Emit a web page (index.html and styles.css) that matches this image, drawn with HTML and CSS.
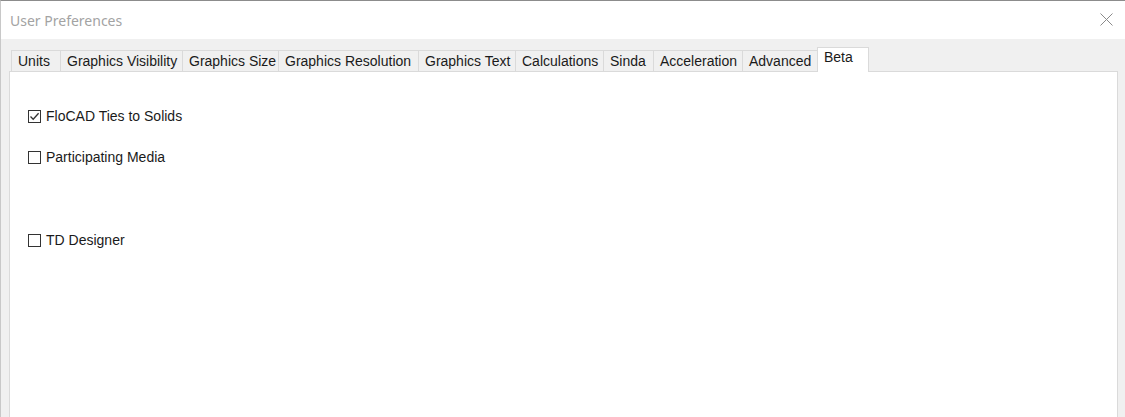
FILE: index.html
```html
<!DOCTYPE html>
<html lang="en">
<head>
    <meta charset="UTF-8">
    <title>User Preferences</title>
    <link rel="stylesheet" href="styles.css">
</head>
<body>
    <div class="window">
        <div class="titlebar">
            <span class="title">User Preferences</span>
            <svg class="close" width="13" height="13" viewBox="0 0 13 13">
                <path d="M0.5 0.5 L12.5 12.5 M12.5 0.5 L0.5 12.5" stroke="#8a8a8a" stroke-width="1" fill="none"/>
            </svg>
        </div>

        <div class="body">
            <div class="tabs">
                <div class="tab w-units">Units</div>
                <div class="tab w-vis">Graphics Visibility</div>
                <div class="tab w-size">Graphics Size</div>
                <div class="tab w-res">Graphics Resolution</div>
                <div class="tab w-text">Graphics Text</div>
                <div class="tab w-calc">Calculations</div>
                <div class="tab w-sinda">Sinda</div>
                <div class="tab w-accel">Acceleration</div>
                <div class="tab w-adv">Advanced</div>
                <div class="tab active w-beta">Beta</div>
            </div>

            <div class="panel">
                <label class="option first">
                    <span class="box checked">
                        <svg width="11" height="11" viewBox="0 0 11 11">
                            <path d="M1.5 5.5 L4.2 8.3 L9.6 2.2" stroke="#333" stroke-width="1.3" fill="none"/>
                        </svg>
                    </span>
                    FloCAD Ties to Solids
                </label>
                <label class="option">
                    <span class="box"></span>
                    Participating Media
                </label>
                <label class="option spaced">
                    <span class="box"></span>
                    TD Designer
                </label>
            </div>
        </div>
    </div>
</body>
</html>
```

FILE: styles.css
```css
html, body {
    margin: 0;
    padding: 0;
    height: 100%;
    overflow: hidden;
}
body {
    font-family: 'Liberation Sans', Arial, sans-serif;
    font-size: 14px;
    color: #1a1a1a;
    background: #ffffff;
}
.window {
    height: 100%;
    box-sizing: border-box;
    border-top: 1px solid #8c8c8c;
    border-left: 1px solid #c8c8c8;
    display: flex;
    flex-direction: column;
}
.titlebar {
    height: 38px;
    background: #ffffff;
    display: flex;
    align-items: center;
    justify-content: space-between;
    padding: 0 12px 0 9px;
}
.title {
    font-family: 'Noto Sans', sans-serif;
    font-size: 14px;
    color: #a3a3a3;
    margin-top: 0;
}
.close {
    margin-top: -1px;
}
.body {
    flex: 1;
    background: #f0f0f0;
    padding: 8px 7px 0 8px;
    display: flex;
    flex-direction: column;
}
.tabs {
    display: flex;
    align-items: flex-end;
    height: 24px;
    padding-left: 2px;
    position: relative;
    z-index: 1;
}
.tab {
    height: 21px;
    box-sizing: border-box;
    border: 1px solid #dadada;
    border-bottom: none;
    border-right: none;
    padding: 0 0 0 6px;
    line-height: 20px;
    background: #f0f0f0;
    white-space: nowrap;
}
.tab.active {
    background: #ffffff;
    border-right: 1px solid #dadada;
    margin-bottom: -1px;
    height: 25px;
    line-height: 19px;
}
.w-units { width: 49px; }
.w-vis { width: 122px; }
.w-size { width: 96px; }
.w-res { width: 140px; }
.w-text { width: 97px; }
.w-calc { width: 88px; }
.w-sinda { width: 50px; }
.w-accel { width: 89px; }
.w-adv { width: 75px; }
.w-beta { width: 52px; }
.panel {
    flex: 1;
    background: #ffffff;
    border: 1px solid #dadada;
    border-bottom: none;
    padding: 0 0 0 18px;
}
.option {
    display: flex;
    align-items: center;
    gap: 5px;
    height: 16px;
}
.option.first {
    margin-top: 36px;
}
.option + .option {
    margin-top: 25px;
}
.option.spaced {
    margin-top: 67px;
}
.box {
    width: 13px;
    height: 13px;
    box-sizing: border-box;
    border: 1px solid #333333;
    background: #ffffff;
    display: flex;
    align-items: center;
    justify-content: center;
}
```
